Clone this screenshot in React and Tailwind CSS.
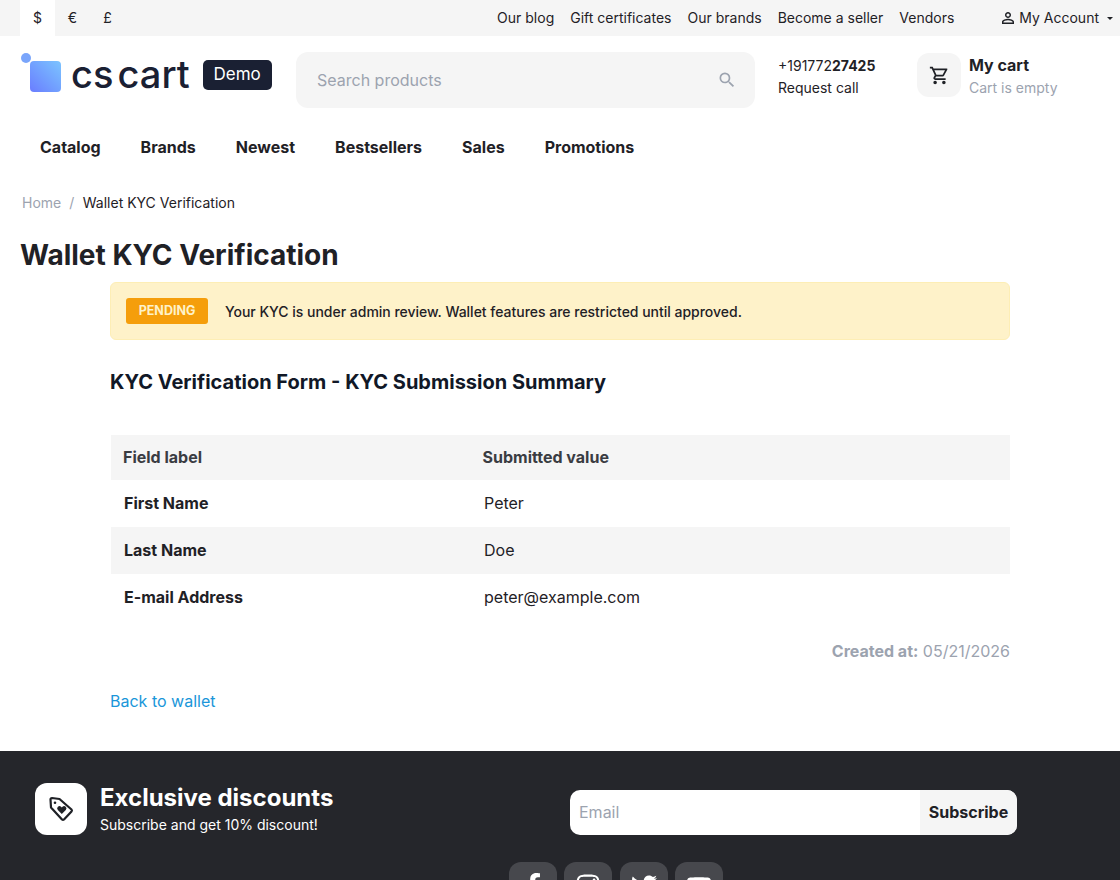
import React from "react";
import { FaFacebookF, FaInstagram, FaTwitter, FaYoutube } from "react-icons/fa";

const Search = () => (
  <svg width="20" height="20" viewBox="0 0 24 24" fill="#9ca3af"><path d="M15.5 14h-.79l-.28-.27A6.47 6.47 0 0 0 16 9.5 6.5 6.5 0 1 0 9.5 16c1.61 0 3.09-.59 4.23-1.57l.27.28v.79l5 4.99L20.49 19l-4.99-5zm-6 0C7.01 14 5 11.99 5 9.5S7.01 5 9.5 5 14 7.01 14 9.5 11.99 14 9.5 14z"/></svg>
);
const Cart = () => (
  <svg width="21" height="21" viewBox="0 0 24 24" fill="#1f2126"><path d="M15.55 13c.75 0 1.41-.41 1.75-1.03l3.58-6.49A.996.996 0 0 0 20.01 4H5.21l-.94-2H1v2h2l3.6 7.59-1.35 2.44C4.52 15.37 5.48 17 7 17h12v-2H7l1.1-2h7.45zM6.16 6h12.15l-2.76 5H8.53L6.16 6zM7 18c-1.1 0-1.99.9-1.99 2S5.9 22 7 22s2-.9 2-2-.9-2-2-2zm10 0c-1.1 0-1.99.9-1.99 2s.89 2 1.99 2 2-.9 2-2-.9-2-2-2z"/></svg>
);
const Person = () => (
  <svg width="18" height="18" viewBox="0 0 24 24" fill="#1f2126"><path d="M12 5.9a2.1 2.1 0 1 1 0 4.2 2.1 2.1 0 0 1 0-4.2m0 9c2.97 0 6.1 1.46 6.1 2.1v1.1H5.9V17c0-.64 3.13-2.1 6.1-2.1M12 4C9.79 4 8 5.79 8 8s1.79 4 4 4 4-1.79 4-4-1.79-4-4-4zm0 9c-2.67 0-8 1.34-8 4v3h16v-3c0-2.66-5.33-4-8-4z"/></svg>
);
const Tag = () => (
  <svg width="30" height="30" viewBox="0 0 30 30" fill="none">
    <path d="M4.5 5.5 a1.5 1.5 0 0 1 1.5-1.5 L13.5 5 L25.5 15.5 a1.5 1.5 0 0 1 0 2 L18 25.5 a1.5 1.5 0 0 1-2 0 L5 13.5 Z" stroke="#1f2126" strokeWidth="2.2" strokeLinejoin="round"/>
    <circle cx="9" cy="8.8" r="1.3" fill="#1f2126"/>
    <path d="M15.8 20 l-4-4 a2.3 2.3 0 0 1 3.3-3.2 l.7.7 .7-.7 a2.3 2.3 0 0 1 3.3 3.2 Z" fill="#1f2126"/>
  </svg>
);

export default function App() {
  return (
    <div className="h-[880px] overflow-hidden bg-white font-['Inter',sans-serif] text-[#1f2126]">
      <div className="flex h-9 items-center justify-between bg-[#f5f5f5] pl-5 pr-[7px] text-sm">
        <div className="flex h-full">
          <span className="flex h-full w-[35px] items-center justify-center bg-white">$</span>
          <span className="flex h-full w-[35px] items-center justify-center">€</span>
          <span className="flex h-full w-[35px] items-center justify-center">£</span>
        </div>
        <div className="flex items-center">
          <div className="flex gap-4">
            <span>Our blog</span>
            <span>Gift certificates</span>
            <span>Our brands</span>
            <span>Become a seller</span>
            <span>Vendors</span>
          </div>
          <div className="ml-[45px] flex items-center gap-[2px]">
            <Person />
            <span>My Account</span>
            <span className="ml-[6px] h-0 w-0 border-x-[3px] border-t-[3px] border-x-transparent border-t-[#1f2126]" />
          </div>
        </div>
      </div>

      <div className="flex h-[72px] items-start pl-[21px] pt-4">
        <div className="flex w-[275px] items-center">
          <div className="relative h-[42px] w-[42px] shrink-0">
            <div className="absolute left-0 top-[1px] h-[10px] w-[10px] rounded-full bg-[#7aa5fb]" />
            <div className="absolute left-[9px] top-[9px] h-[31px] w-[31px] rounded-[4px] bg-gradient-to-tr from-[#6a7cff] to-[#7cc4ff]" />
          </div>
          <span className="ml-[8px] mt-[2px] text-[38px] font-medium leading-none text-[#1a2033] [word-spacing:-6px]">cs cart</span>
          <span className="ml-[13px] mt-[3px] flex h-[30px] w-[69px] items-center justify-center rounded-[5px] bg-[#1a2033] text-[17px] text-white">Demo</span>
        </div>
        <div className="flex h-14 w-[459px] items-center justify-between rounded-xl bg-[#f5f5f5] pl-[21px] pr-[18px]">
          <span className="text-base text-[#9ca3af]">Search products</span>
          <Search />
        </div>
        <div className="ml-[23px] mt-[3px] w-[139px] text-sm leading-[22px]">
          <div>+191772<b className="font-bold">27425</b></div>
          <div>Request call</div>
        </div>
        <div className="mt-px flex gap-2">
          <div className="flex h-11 w-11 items-center justify-center rounded-xl bg-[#f5f5f5]"><Cart /></div>
          <div>
            <div className="text-base font-bold leading-6">My cart</div>
            <div className="text-sm leading-[22px] text-[#9ca3af]">Cart is empty</div>
          </div>
        </div>
      </div>

      <div className="flex h-[78px] items-center gap-10 pl-10 text-base font-bold">
        <span>Catalog</span>
        <span>Brands</span>
        <span>Newest</span>
        <span>Bestsellers</span>
        <span>Sales</span>
        <span>Promotions</span>
      </div>

      <div className="flex h-[34px] items-center gap-2 pl-[22px] text-sm">
        <span className="text-[#9ca3af]">Home</span>
        <span className="text-[#9ca3af]">/</span>
        <span className="ml-[0.5px]">Wallet KYC Verification</span>
      </div>

      <h1 className="mt-[15px] h-[47px] pl-5 text-[28px] font-bold leading-[40px]">Wallet KYC Verification</h1>

      <div className="mx-[110px] w-[900px]">
        <div className="flex h-[58px] items-center gap-[17px] rounded-md border border-[#fdeeb5] bg-[#fef2c9] pl-[15px] text-sm">
          <span className="flex h-[26px] w-[82px] items-center justify-center rounded-[3px] bg-[#f59e0b] text-[12.5px] font-bold text-[#fef2c9]">PENDING</span>
          <span className="mt-px font-medium tracking-[-0.015px]">Your KYC is under admin review. Wallet features are restricted until approved.</span>
        </div>

        <h2 className="mt-[28px] text-xl font-bold leading-7 text-[#111827]">KYC Verification Form - KYC Submission Summary</h2>

        <div className="mt-[39px] ml-px text-base">
          <div className="flex h-[45px] items-center bg-[#f5f5f5] pb-[2px] font-bold text-[#3a3c42]">
            <span className="w-[359px] pl-[12px]">Field label</span>
            <span className="pl-[12.5px]">Submitted value</span>
          </div>
          <div className="flex h-[47px] items-center pb-[2px]">
            <span className="w-[359px] pl-[13px] font-bold">First Name</span>
            <span className="pl-[14px]">Peter</span>
          </div>
          <div className="flex h-[47px] items-center bg-[#f5f5f5] pb-[2px]">
            <span className="w-[359px] pl-[13px] font-bold">Last Name</span>
            <span className="pl-[14px]">Doe</span>
          </div>
          <div className="flex h-[47px] items-center pb-[2px]">
            <span className="w-[359px] pl-[13px] font-bold">E-mail Address</span>
            <span className="pl-[14px]">peter@example.com</span>
          </div>
        </div>

        <div className="mt-[18px] text-right text-base leading-6 text-[#9ca3af]"><b className="font-bold">Created at:</b> 05/21/2026</div>
        <div className="mt-[26px] text-base leading-6 text-[#1a96d9]">Back to wallet</div>
      </div>

      <div className="mt-[38px] h-[300px] bg-[#25262b] text-white">
        <div className="flex pt-8">
          <div className="ml-[35px] flex h-[52px] w-[52px] items-center justify-center rounded-xl bg-white"><Tag /></div>
          <div className="ml-[13px] w-[470px]">
            <div className="text-2xl font-bold leading-[30px]">Exclusive discounts</div>
            <div className="text-sm leading-[24px]">Subscribe and get 10% discount!</div>
          </div>
          <div className="mt-[7px] flex h-[45px] w-[447px] overflow-hidden rounded-[10px] bg-white pb-0">
            <span className="flex flex-1 items-center pb-[2px] pl-[9px] text-base text-[#9ca3af]">Email</span>
            <span className="flex w-[97px] items-center justify-center bg-[#f5f5f5] pb-[2px] text-base font-bold text-[#1f2126]">Subscribe</span>
          </div>
        </div>
        <div className="mt-[25px] flex gap-[7.4px] pl-[509px]">
          {[FaFacebookF, FaInstagram, FaTwitter, FaYoutube].map((I, i) => (
            <div key={i} className="flex h-12 w-12 items-center justify-center rounded-xl bg-[#47484d] text-[26px] text-white"><I /></div>
          ))}
        </div>
      </div>
    </div>
  );
}
